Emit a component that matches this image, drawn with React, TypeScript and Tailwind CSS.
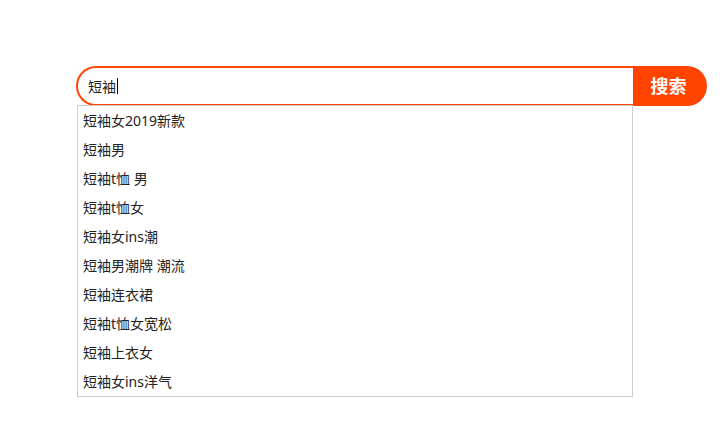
import React from 'react';

const SUGGESTIONS = [
    '短袖女2019新款',
    '短袖男',
    '短袖t恤 男',
    '短袖t恤女',
    '短袖女ins潮',
    '短袖男潮牌 潮流',
    '短袖连衣裙',
    '短袖t恤女宽松',
    '短袖上衣女',
    '短袖女ins洋气',
];

const App: React.FC = () => {
    return (
        <div
        className="w-[720px] h-[427px] bg-white pt-[66px] pl-[76px]"
        style={{ fontFamily: '"Noto Sans", "Noto Sans CJK SC", sans-serif' }}>
            <div className="relative flex w-[631px] h-[40px]">
                {/* Search input */}
                <div className="flex-1 flex items-center h-[40px] border-2 border-r-0 border-[#ff4400] rounded-l-[20px] pl-[10px] text-[14px] text-[#222]">
                    <span>短袖</span>
                    <span className="inline-block w-px h-[16px] bg-black ml-px" />
                </div>
                <button className="w-[74px] h-[40px] bg-[#ff4400] rounded-r-[20px] text-white text-[18px] font-bold pr-[3px]">
                    搜索
                </button>

                {/* Suggestion list */}
                <ul className="absolute left-[1px] top-[39px] w-[556px] bg-white border border-[#cccccc] text-[14px] text-[#222]">
                    {SUGGESTIONS.map(s => (
                        <li key={s} className="h-[29px] leading-[29px] pl-[5px]">{s}</li>
                    ))}
                </ul>
            </div>
        </div>
    );
};

export default App;
